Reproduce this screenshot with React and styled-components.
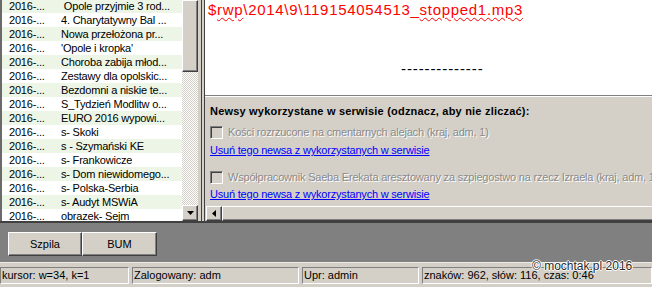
import React from 'react';
import styled, { createGlobalStyle } from 'styled-components';

const FACE = '#d4d0c8';
const SHADOW = '#808080';
const DARK = '#404040';

const GlobalStyle = createGlobalStyle`
	html, body {
		margin: 0;
		padding: 0;
		background: ${SHADOW};
	}
	body {
		font-family: "Liberation Sans", Arial, sans-serif;
	}
	* {
		box-sizing: border-box;
	}
`;

const Window = styled.div`
	position: relative;
	width: 652px;
	height: 287px;
	overflow: hidden;
	display: flex;
	flex-direction: column;
	background: ${FACE};
`;

const Main = styled.div`
	display: flex;
	flex: none;
	height: 223px;
	border-bottom: 2px solid ${DARK};
`;

const ListPane = styled.div`
	width: 182px;
	flex: none;
	overflow: hidden;
	background: #fff;
	border-left: 2px solid #6a6a6a;
`;

const ListInner = styled.div`
	margin-top: -1px;
`;

const Row = styled.div`
	display: flex;
	height: 14px;
	line-height: 14px;
	font-size: 11px;
	letter-spacing: -0.2px;
	color: #000;
	white-space: nowrap;
	background: ${(p) => (p.$odd ? '#ecf5e6' : '#fff')};
`;

const DateCell = styled.span`
	flex: none;
	width: 59px;
	padding-left: 7px;
`;

const TitleCell = styled.span`
	overflow: hidden;
`;

const VScroll = styled.div`
	width: 16px;
	flex: none;
	display: flex;
	flex-direction: column;
`;

const raised = `
	background: ${FACE};
	border: 1px solid;
	border-color: #fff ${DARK} ${DARK} #fff;
	box-shadow: inset -1px -1px ${SHADOW};
`;

const Thumb = styled.div`
	${raised}
	height: ${(p) => p.$size}px;
	flex: none;
`;

const Track = styled.div`
	flex: 1;
	background-color: ${FACE};
	background-image: conic-gradient(#fff 25%, ${FACE} 0 50%, #fff 0 75%, ${FACE} 0);
	background-size: 2px 2px;
`;

const ArrowButton = styled.div`
	${raised}
	width: ${(p) => p.$w}px;
	height: ${(p) => p.$h}px;
	flex: none;
	display: flex;
	align-items: center;
	justify-content: center;
`;

const Splitter = styled.div`
	width: 3px;
	flex: none;
	background: ${FACE};
`;

const RightPane = styled.div`
	flex: 1;
	min-width: 0;
	display: flex;
	border-left: 1px solid ${DARK};
	padding-left: 2px;
`;

const Frame = styled.div`
	flex: 1;
	min-width: 0;
	display: flex;
	flex-direction: column;
	border-left: 1px solid ${DARK};
	overflow: hidden;
`;

const Memo = styled.div`
	height: 96px;
	flex: none;
	background: #fff;
	border-bottom: 1px solid ${SHADOW};
	padding: 1px 0 0 3px;
	font-size: 15px;
	line-height: 18px;
	letter-spacing: 0.7px;
	white-space: nowrap;
`;

const PathLine = styled.div`
	color: #ff0000;
`;

const Misspelled = styled.span`
	text-decoration: underline wavy #ff0000;
	text-decoration-thickness: 1px;
	text-underline-offset: 2px;
`;

const Dashes = styled.div`
	margin-top: 41px;
	padding-left: 193px;
	letter-spacing: 0.9px;
	color: #000;
`;

const NewsPanel = styled.div`
	flex: 1;
	border-top: 1px solid #fff;
	padding-left: 5px;
	font-size: 11px;
	line-height: 13px;
	letter-spacing: -0.2px;
	white-space: nowrap;
`;

const Heading = styled.div`
	margin-top: 8px;
	font-weight: bold;
	letter-spacing: 0.2px;
	color: #000;
`;

const CheckRow = styled.div`
	display: flex;
	align-items: center;
	gap: 5px;
	margin-top: ${(p) => p.$gap}px;
	height: 13px;
`;

const CheckBox = styled.span`
	width: 13px;
	height: 13px;
	flex: none;
	background: ${FACE};
	border: 1px solid;
	border-color: ${SHADOW} #fff #fff ${SHADOW};
	box-shadow: inset 1px 1px ${DARK}, inset -1px -1px ${FACE};
`;

const DisabledLabel = styled.span`
	color: #8a8a8a;
	text-shadow: 1px 1px 0 #fff;
`;

const RemoveLink = styled.a`
	display: block;
	margin-top: ${(p) => p.$gap}px;
	color: #0000ff;
	text-decoration: underline;
	cursor: pointer;
`;

const HScroll = styled.div`
	height: 15px;
	flex: none;
	display: flex;
	padding-left: 1px;
	background: ${FACE};
`;

const HThumb = styled.div`
	${raised}
	flex: 1;
	margin-right: -40px;
`;

const ButtonBar = styled.div`
	height: 39px;
	flex: none;
	display: flex;
	align-items: flex-start;
	padding: 9px 8px 0;
	background: ${SHADOW};
`;

const ToolButton = styled.button`
	${raised}
	width: ${(p) => p.$w}px;
	height: 24px;
	padding: 0;
	font-family: inherit;
	font-size: 11px;
	color: #000;
`;

const StatusBar = styled.div`
	flex: 1;
	display: flex;
	gap: 3px;
	padding: 4px 0 0;
	border-top: 1px solid #ecebe6;
`;

const StatusPanel = styled.div`
	width: ${(p) => (p.$w ? `${p.$w}px` : 'auto')};
	flex: ${(p) => (p.$w ? 'none' : '1')};
	height: 17px;
	border: 1px solid;
	border-color: ${SHADOW} #fff #fff ${SHADOW};
	padding-left: 1px;
	font-size: 11px;
	line-height: 15px;
	color: #000;
	white-space: nowrap;
	overflow: hidden;
`;

const Watermark = styled.div`
	position: absolute;
	left: 532px;
	top: 259px;
	font-size: 12px;
	line-height: 14px;
	color: #2a2a2a;
	text-shadow: 1px 0 #fff, -1px 0 #fff, 0 1px #fff, 0 -1px #fff;
	white-space: nowrap;
`;

const DownArrow = () => (
	<svg width="7" height="4" viewBox="0 0 7 4">
		<polygon points="0,0 7,0 3.5,4" fill="#000" />
	</svg>
);

const LeftArrow = () => (
	<svg width="4" height="7" viewBox="0 0 4 7">
		<polygon points="4,0 4,7 0,3.5" fill="#000" />
	</svg>
);

const items = [
	'\u00a0Opole przyjmie 3 rod...',
	'4. Charytatywny Bal ...',
	'Nowa przełożona pr...',
	"'Opole i kropka'",
	'Choroba zabija młod...',
	'Zestawy dla opolskic...',
	'Bezdomni a niskie te...',
	'S_Tydzień Modlitw o...',
	'EURO 2016 wypowi...',
	's- Skoki',
	's - Szymański KE',
	's- Frankowicze',
	's- Dom niewidomego...',
	's- Polska-Serbia',
	's- Audyt MSWiA',
	'obrazek- Sejm',
];

const App = () => (
	<Window>
		<GlobalStyle />
		<Main>
			<ListPane>
				<ListInner>
					{items.map((title, i) => (
						<Row key={i} $odd={i % 2 === 0}>
							<DateCell>2016-...</DateCell>
							<TitleCell>{title}</TitleCell>
						</Row>
					))}
				</ListInner>
			</ListPane>
			<VScroll>
				<Thumb $size={72} />
				<Track />
				<ArrowButton $w={16} $h={16}>
					<DownArrow />
				</ArrowButton>
			</VScroll>
			<Splitter />
			<RightPane>
				<Frame>
					<Memo>
						<PathLine>
							$<Misspelled>rwp</Misspelled>\2014\9\119154054513_<Misspelled>stopped1.mp3</Misspelled>
						</PathLine>
						<Dashes>--------------</Dashes>
					</Memo>
					<NewsPanel>
						<Heading>Newsy wykorzystane w serwisie (odznacz, aby nie zliczać):</Heading>
						<CheckRow $gap={8}>
							<CheckBox />
							<DisabledLabel>Kości rozrzucone na cmentarnych alejach (kraj, adm, 1)</DisabledLabel>
						</CheckRow>
						<RemoveLink $gap={5}>Usuń tego newsa z wykorzystanych w serwisie</RemoveLink>
						<CheckRow $gap={14}>
							<CheckBox />
							<DisabledLabel>
								Współpracownik Saeba Erekata aresztowany za szpiegostwo na rzecz Izraela (kraj, adm, 1)
							</DisabledLabel>
						</CheckRow>
						<RemoveLink $gap={4}>Usuń tego newsa z wykorzystanych w serwisie</RemoveLink>
					</NewsPanel>
					<HScroll>
						<ArrowButton $w={16} $h={15}>
							<LeftArrow />
						</ArrowButton>
						<HThumb />
					</HScroll>
				</Frame>
			</RightPane>
		</Main>
		<ButtonBar>
			<ToolButton $w={74}>Szpila</ToolButton>
			<ToolButton $w={75}>BUM</ToolButton>
		</ButtonBar>
		<StatusBar>
			<StatusPanel $w={129}>kursor: w=34, k=1</StatusPanel>
			<StatusPanel $w={167}>Zalogowany: adm</StatusPanel>
			<StatusPanel $w={117}>Upr: admin</StatusPanel>
			<StatusPanel>znaków: 962, słów: 116, czas: 0:46</StatusPanel>
		</StatusBar>
		<Watermark>© mochtak.pl 2016</Watermark>
	</Window>
);

export default App;
